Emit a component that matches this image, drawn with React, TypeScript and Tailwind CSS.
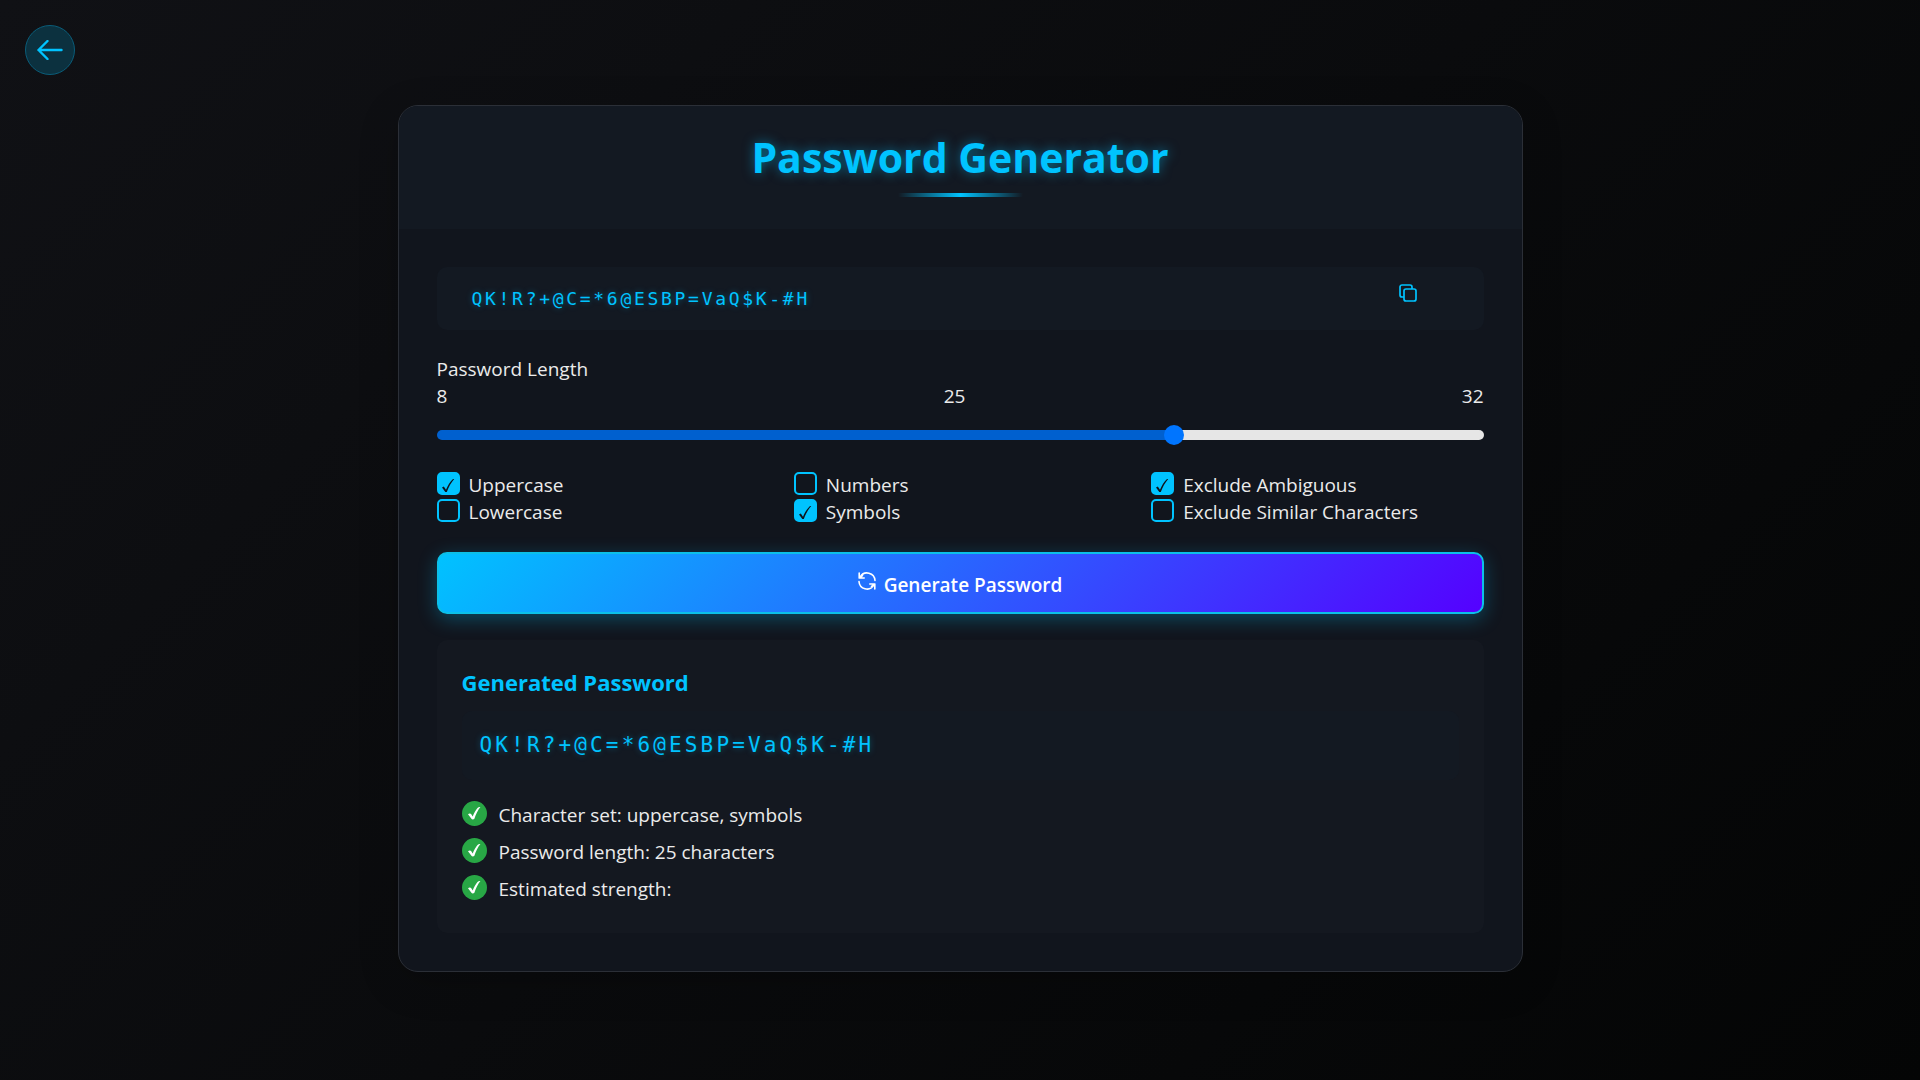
import { useState } from "react";

const PASSWORD = "QK!R?+@C=*6@ESBP=VaQ$K-#H";
const MIN = 8;
const MAX = 32;

const OPTION_COLUMNS = [
  [
    { label: "Uppercase", checked: true },
    { label: "Lowercase", checked: false },
  ],
  [
    { label: "Numbers", checked: false },
    { label: "Symbols", checked: true },
  ],
  [
    { label: "Exclude Ambiguous", checked: true },
    { label: "Exclude Similar Characters", checked: false },
  ],
];

function ArrowIcon() {
  return (
    <svg width="26" height="20" viewBox="0 0 26 20" fill="none" stroke="#00c3ff" strokeWidth="2.4" strokeLinecap="round" strokeLinejoin="round" aria-hidden="true">
      <path d="M24.5 10H1.5M10.500 1 1.500 10l9 9" />
    </svg>
  );
}

function CopyIcon() {
  return (
    <svg width="18" height="18" viewBox="0 0 18 18" fill="none" stroke="#00c3ff" strokeWidth="1.7" aria-hidden="true">
      <rect x="5" y="5" width="12" height="12" rx="2" />
      <path d="M5 13H3a2 2 0 0 1-2-2V3a2 2 0 0 1 2-2h8a2 2 0 0 1 2 2v2" />
    </svg>
  );
}

function RefreshIcon() {
  return (
    <svg width="18" height="18" viewBox="0 0 18 18" fill="none" stroke="currentColor" strokeWidth="1.600" strokeLinecap="round" strokeLinejoin="round" aria-hidden="true">
      <path d="M17 8.500A8 8 0 0 0 2.200 4.800L1.200 6M1.200 1v5h5M4.500 3.700 1.200 6" />
      <path d="M1 9.500A8 8 0 0 0 15.800 13.200L16.800 12M16.800 17v-5h-5M13.500 14.300 16.800 12" />
    </svg>
  );
}

function Option({ label, checked }: { label: string; checked: boolean }) {
  return (
    <label className="flex h-[27px] items-center gap-[9px]">
      <span className="grid size-[23px] shrink-0 self-start">
        <input
          type="checkbox"
          defaultChecked={checked}
          className="peer col-start-1 row-start-1 size-[23px] appearance-none rounded-[5px] border-2 border-[#00c3ff] checked:bg-[#00c3ff]"
        />
        <svg
          viewBox="0 0 23 23"
          className="pointer-events-none invisible col-start-1 row-start-1 size-[23px] peer-checked:visible"
          fill="#0f131b"
          aria-hidden="true"
        >
          <path d="M5 15.500l1.800-1 2.200 3.300C10.800 13.500 13 9.800 16 7h1.200C14 10.700 11.600 15 9.800 20H8.300Z" />
        </svg>
      </span>
      {label}
    </label>
  );
}

function Detail({ children }: { children: string }) {
  return (
    <li className="flex h-[37px] items-center gap-3">
      <svg width="25" height="25" viewBox="0 0 25 25" className="mb-1 shrink-0" aria-hidden="true">
        <circle cx="12.500" cy="12.500" r="12.500" fill="#28a745" />
        <path d="M6 13.200c1-1 2.600-1.100 3.100-.1l1.600 2.500C12 12 13.700 8.800 15.500 6.900c.9-.8 1.900-1 2.900-.8-2.600 3.200-4.600 7.300-6 11.700-.8.800-2.400.9-3 0Z" fill="#fff" />
      </svg>
      {children}
    </li>
  );
}

export default function App() {
  const [length, setLength] = useState(25);
  const fraction = (length - MIN) / (MAX - MIN);
  const fill = `calc(10px + (100% - 20px) * ${fraction})`;

  return (
    <div className="flex min-h-screen flex-col bg-linear-135/srgb from-[#101115] to-[#040505] font-['Open_Sans','Noto_Sans',sans-serif] text-[19px] leading-[27px] text-[#ebebeb]">
      <a
        href="#back"
        aria-label="Back"
        className="absolute top-[25px] left-[25px] flex size-[50px] items-center justify-center rounded-full border border-[#0a5c78] bg-[#0c313f]"
      >
        <ArrowIcon />
      </a>

      <main className="mx-auto mt-[105px] mb-10 w-full max-w-[1125px] overflow-hidden rounded-[20px] border border-[#2b2f37] bg-[#11151d] shadow-[0_10px_40px_rgba(0,0,0,0.2)]">
        <header className="flex h-[123px] flex-col items-center bg-[#131922] pt-[21px]">
          <h1 className="text-[41px] leading-[60px] font-bold text-[#00c3ff] [text-shadow:0_0_12px_rgba(0,195,255,0.5)]">
            Password Generator
          </h1>
          <div className="mt-[6px] h-1 w-[125px] bg-linear-to-r from-transparent via-[#00c3ff] to-transparent" />
        </header>

        <div className="p-[38px]">
          <div className="flex h-[63px] items-center justify-between rounded-[10px] bg-[#131922] pr-[67px] pl-[35px]">
            <output className="font-['DejaVu_Sans_Mono',monospace] text-[18px] tracking-[0.15em] text-[#00c3ff] [text-shadow:0_0_6px_rgba(0,195,255,0.35)]">
              {PASSWORD}
            </output>
            <button type="button" aria-label="Copy password" className="mb-3">
              <CopyIcon />
            </button>
          </div>

          <div className="mt-[26px]">
            <label htmlFor="length" className="block">
              Password Length
            </label>
            <div className="flex justify-between">
              <span>{MIN}</span>
              <span>{length}</span>
              <span>{MAX}</span>
            </div>
            <input
              id="length"
              type="range"
              min={MIN}
              max={MAX}
              value={length}
              onChange={(e) => setLength(Number(e.target.value))}
              style={{ backgroundImage: `linear-gradient(to right, #0060cf ${fill}, #e6e6e6 ${fill})` }}
              className="mt-5 block h-[10px] w-full appearance-none rounded-full [&::-webkit-slider-thumb]:size-5 [&::-webkit-slider-thumb]:appearance-none [&::-webkit-slider-thumb]:rounded-full [&::-webkit-slider-thumb]:bg-[#0075ff]"
            />
          </div>

          <div className="mt-8 grid grid-cols-3 gap-[25px]">
            {OPTION_COLUMNS.map((column) => (
              <div key={column[0].label}>
                {column.map((option) => (
                  <Option key={option.label} {...option} />
                ))}
              </div>
            ))}
          </div>

          <button
            type="button"
            className="mt-[26px] flex h-[62px] w-full items-center justify-center gap-[8px] rounded-[10px] border-2 border-[#0cc0e8] bg-linear-135/srgb from-[#00c3ff] to-[#5500ff] bg-origin-border pt-1 font-semibold text-white shadow-[0_5px_19px_rgba(0,195,255,0.3)]"
          >
            <span className="mb-2">
              <RefreshIcon />
            </span>
            Generate Password
          </button>

          <section className="mt-[26px] rounded-[10px] bg-[#141820] p-[25px]">
            <h2 className="text-[22px] leading-[34px] font-bold text-[#00c3ff]">Generated Password</h2>
            <div className="mt-3 rounded-[10px] bg-[#131922] px-[18px] py-[21px] font-['DejaVu_Sans_Mono',monospace] text-[21px] tracking-[0.15em] text-[#00c3ff] [text-shadow:0_0_6px_rgba(0,195,255,0.35)]">
              {PASSWORD}
            </div>
            <ul className="mt-[17px]">
              <Detail>Character set: uppercase, symbols</Detail>
              <Detail>Password length: 25 characters</Detail>
              <Detail>Estimated strength:</Detail>
            </ul>
          </section>
        </div>
      </main>
    </div>
  );
}
